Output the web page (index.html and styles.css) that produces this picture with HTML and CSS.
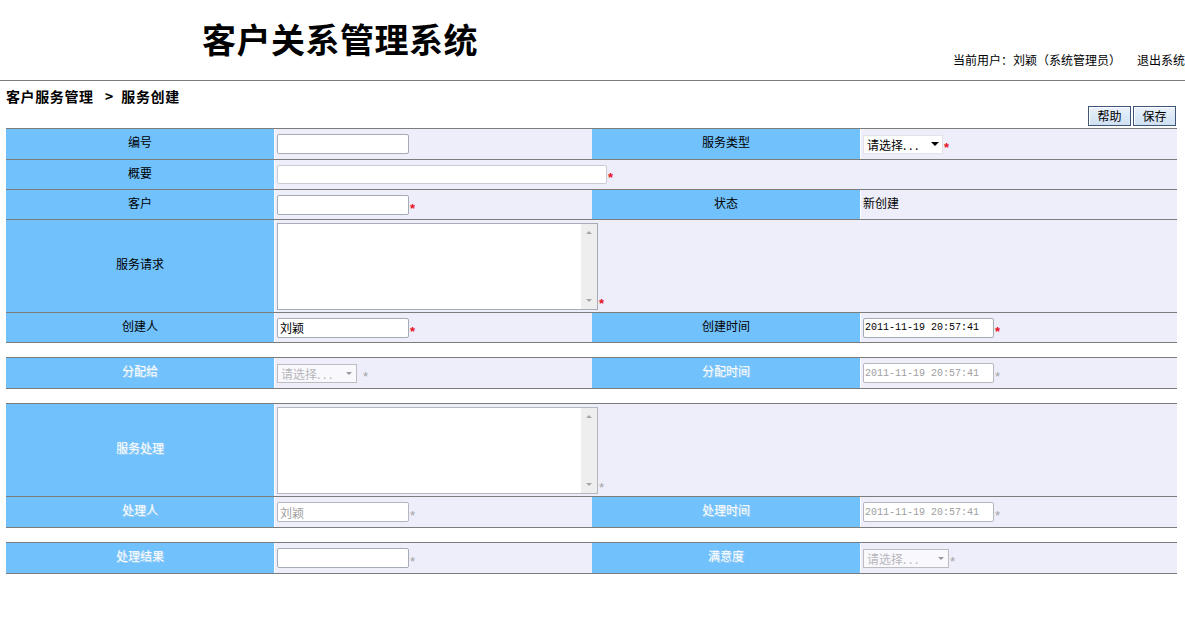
FILE: index.html
```html
<!DOCTYPE html>
<html lang="zh-CN">
<head>
<meta charset="utf-8">
<title>客户关系管理系统</title>
<link rel="stylesheet" href="styles.css">
</head>
<body>
<header class="top">
  <h1 class="title">客户关系管理系统</h1>
  <div class="user">当前用户：刘颖（系统管理员）<a class="logout" href="#">退出系统</a></div>
</header>
<div class="crumb">客户服务管理&nbsp;&nbsp;&nbsp;&gt;&nbsp;&nbsp;服务创建</div>
<div class="toolbar">
  <button class="btn" type="button">帮助</button>
  <button class="btn" type="button">保存</button>
</div>
<form class="form">
  <div class="block">
    <div class="row h31">
      <div class="lbl">编号</div>
      <div class="val"><input class="txt" type="text"></div>
      <div class="lbl">服务类型</div>
      <div class="val"><span class="field"><span class="sel"><select><option>请选择. . .</option></select></span><i class="req">*</i></span></div>
    </div>
    <div class="row h30">
      <div class="lbl">概要</div>
      <div class="val wide"><span class="field"><input class="txt long" type="text"><i class="req">*</i></span></div>
    </div>
    <div class="row h30">
      <div class="lbl">客户</div>
      <div class="val"><span class="field"><input class="txt" type="text"><i class="req">*</i></span></div>
      <div class="lbl">状态</div>
      <div class="val"><span class="plain">新创建</span></div>
    </div>
    <div class="row h93">
      <div class="lbl">服务请求</div>
      <div class="val wide"><span class="field"><span class="areabox"><textarea class="area"></textarea><span class="sb"></span></span><i class="req">*</i></span></div>
    </div>
    <div class="row h30">
      <div class="lbl">创建人</div>
      <div class="val"><span class="field"><input class="txt" type="text" value="刘颖"><i class="req">*</i></span></div>
      <div class="lbl">创建时间</div>
      <div class="val"><span class="field"><input class="txt date" type="text" value="2011-11-19 20:57:41"><i class="req">*</i></span></div>
    </div>
  </div>

  <div class="block off">
    <div class="row h31">
      <div class="lbl">分配给</div>
      <div class="val"><span class="field"><span class="sel dis"><select disabled><option>请选择. . .</option></select></span><i class="req gray sp">*</i></span></div>
      <div class="lbl">分配时间</div>
      <div class="val"><span class="field"><input class="txt date" type="text" value="2011-11-19 20:57:41" disabled><i class="req gray">*</i></span></div>
    </div>
  </div>

  <div class="block off">
    <div class="row h93">
      <div class="lbl">服务处理</div>
      <div class="val wide"><span class="field"><span class="areabox"><textarea class="area" disabled></textarea><span class="sb"></span></span><i class="req gray">*</i></span></div>
    </div>
    <div class="row h31">
      <div class="lbl">处理人</div>
      <div class="val"><span class="field"><input class="txt" type="text" value="刘颖" disabled><i class="req gray">*</i></span></div>
      <div class="lbl">处理时间</div>
      <div class="val"><span class="field"><input class="txt date" type="text" value="2011-11-19 20:57:41" disabled><i class="req gray">*</i></span></div>
    </div>
  </div>

  <div class="block off">
    <div class="row h31">
      <div class="lbl">处理结果</div>
      <div class="val"><span class="field"><input class="txt" type="text"><i class="req gray">*</i></span></div>
      <div class="lbl">满意度</div>
      <div class="val"><span class="field"><span class="sel dis wide86"><select disabled><option>请选择. . .</option></select></span><i class="req gray">*</i></span></div>
    </div>
  </div>
</form>
</body>
</html>
```
FILE: styles.css
```css
html, body {
  margin: 0;
  padding: 0;
  background: #fff;
}
body {
  font-family: "Noto Sans CJK SC", "Liberation Sans", sans-serif;
  font-size: 12px;
  color: #000;
  overflow: hidden;
}
.top {
  display: flex;
  justify-content: space-between;
  align-items: flex-end;
  box-sizing: border-box;
  height: 81px;
  border-bottom: 1px solid #7c7c7c;
  overflow: hidden;
}
.title {
  margin: 0 0 0 202px;
  align-self: flex-start;
  padding-top: 20px;
  font-size: 34px;
  line-height: 38px;
  font-weight: bold;
  letter-spacing: 0.5px;
}
.user {
  white-space: nowrap;
  line-height: 16px;
  padding-bottom: 12px;
}
.logout {
  color: #000;
  text-decoration: none;
  margin-left: 16px;
}
.crumb {
  padding: 6px 0 0 6px;
  font-size: 14px;
  font-weight: bold;
  line-height: 18px;
  height: 19px;
  letter-spacing: 0.6px;
}
.toolbar {
  display: flex;
  justify-content: flex-end;
  gap: 2px;
  padding-right: 9px;
  height: 22px;
}
.btn {
  width: 43px;
  height: 20px;
  padding: 0;
  margin: 0;
  font-family: "Noto Sans CJK SC", sans-serif;
  font-size: 12px;
  line-height: 16px;
  color: #000;
  border: 1px solid #3f5677;
  box-shadow: inset 1px 1px 0 #ffffff;
  background: linear-gradient(#eaf2fb, #cfe0f2);
}
.form {
  margin: 0;
  padding: 0 8px 0 6px;
}
.block {
  border-bottom: 1px solid #7c7c7c;
  margin-bottom: 14px;
}
.row {
  display: grid;
  grid-template-columns: 268px 318px 268px 1fr;
  border-top: 1px solid #7c7c7c;
  box-sizing: border-box;
}
.h30 { height: 30px; }
.h31 { height: 31px; }
.h93 { height: 93px; }
.lbl {
  background: #71c1fd;
  display: flex;
  align-items: center;
  justify-content: center;
  padding-bottom: 5px;
  box-sizing: border-box;
}
.off .lbl {
  color: #ffffff;
  text-shadow: 1px 1px 0 #a9d4f3;
}
.val {
  background: #eeedfa;
  border-left: 1px solid #ffffff;
  padding-left: 2px;
  display: flex;
  align-items: center;
}
.val.wide {
  grid-column: 2 / 5;
}
.plain {
  padding-bottom: 4px;
}
.field {
  display: inline-flex;
  align-items: flex-end;
}
.req {
  font-style: normal;
  font-family: "Liberation Sans", sans-serif;
  font-weight: bold;
  font-size: 13px;
  line-height: 13px;
  color: #e5101c;
  margin: 0 0 0 1px;
}
.req.gray {
  color: #a3a3a3;
  font-weight: normal;
}
.req.sp {
  margin-left: 6px;
}
.txt {
  box-sizing: border-box;
  width: 132px;
  height: 20px;
  margin: 0;
  padding: 0 2px;
  border: 1px solid #a5acb5;
  border-radius: 2px;
  background: #fff;
  font-family: "Noto Sans CJK SC", sans-serif;
  font-size: 12px;
  color: #000;
}
.txt.long {
  width: 330px;
  height: 19px;
  border-color: #c8cdd4;
}
.txt.date {
  width: 131px;
  padding: 0 1px;
  font-family: "Liberation Mono", monospace;
  font-size: 10px;
}
.txt:disabled {
  color: #a0a0a0;
  border-color: #b4b8be;
  background: #fff;
}
.areabox {
  position: relative;
  display: inline-block;
  line-height: 0;
}
.area {
  display: block;
  box-sizing: border-box;
  width: 321px;
  height: 87px;
  margin: 0;
  padding: 1px;
  border: 1px solid #a5acb5;
  resize: none;
  overflow: hidden;
  background: #fff;
}
.area:disabled {
  background: #fff;
  border-color: #b4b8be;
}
.sb {
  position: absolute;
  top: 1px;
  right: 1px;
  bottom: 1px;
  width: 16px;
  background: #eeeeee;
}
.sb::before,
.sb::after {
  content: "";
  position: absolute;
  left: 5px;
  border-left: 3px solid transparent;
  border-right: 3px solid transparent;
}
.sb::before {
  top: 7px;
  border-bottom: 3px solid #a8a8a8;
}
.sb::after {
  bottom: 7px;
  border-top: 3px solid #a8a8a8;
}
.sel {
  position: relative;
  display: inline-block;
}
.sel select {
  appearance: none;
  -webkit-appearance: none;
  box-sizing: border-box;
  width: 80px;
  height: 19px;
  margin: 0;
  padding: 0 14px 0 3px;
  border: 1px solid #e2e2ea;
  border-radius: 0;
  background: #fff;
  font-family: "Noto Sans CJK SC", sans-serif;
  font-size: 12px;
  color: #000;
  display: block;
}
.sel::after {
  content: "";
  position: absolute;
  right: 4px;
  top: 7px;
  border-left: 4px solid transparent;
  border-right: 4px solid transparent;
  border-top: 4px solid #000;
}
.sel.dis select {
  border-color: #a9a9a9;
  color: #a0a0a0;
}
.sel.dis::after {
  border-left-width: 3px;
  border-right-width: 3px;
  border-top: 3px solid #9a9a9a;
  right: 5px;
  top: 8px;
}
.sel.wide86 select {
  width: 86px;
}
```
